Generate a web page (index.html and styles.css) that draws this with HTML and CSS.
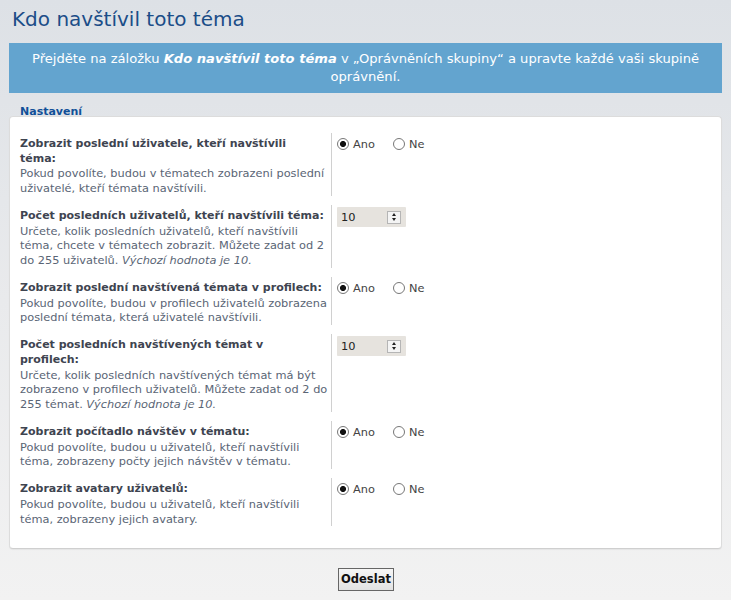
FILE: index.html
```html
<!DOCTYPE html>
<html lang="cs">
<head>
<meta charset="utf-8">
<title>Kdo navštívil toto téma</title>
<link rel="stylesheet" href="styles.css">
</head>
<body>
<div class="page">
  <h1 class="title">Kdo navštívil toto téma</h1>
  <div class="info">Přejděte na záložku <b><i>Kdo navštívil toto téma</i></b> v „Oprávněních skupiny“ a upravte každé vaši skupině oprávnění.</div>

  <div class="legend">Nastavení</div>
  <div class="panel">
    <div class="row">
      <div class="dt"><div class="label">Zobrazit poslední uživatele, kteří navštívili<br>téma:</div><div class="explain">Pokud povolíte, budou v tématech zobrazeni poslední uživatelé, kteří témata navštívili.</div></div>
      <div class="dd"><span class="radio on"></span><span class="rl">Ano</span><span class="radio"></span><span class="rl">Ne</span></div>
    </div>
    <div class="row">
      <div class="dt"><div class="label">Počet posledních uživatelů, kteří navštívili téma:</div><div class="explain">Určete, kolik posledních uživatelů, kteří navštívili téma, chcete v tématech zobrazit. Můžete zadat od 2 do 255 uživatelů. <i>Výchozí hodnota je 10.</i></div></div>
      <div class="dd"><div class="num"><span class="numval">10</span><span class="spin"><span class="up"></span><span class="dn"></span></span></div></div>
    </div>
    <div class="row">
      <div class="dt"><div class="label">Zobrazit poslední navštívená témata v profilech:</div><div class="explain">Pokud povolíte, budou v profilech uživatelů zobrazena poslední témata, která uživatelé navštívili.</div></div>
      <div class="dd"><span class="radio on"></span><span class="rl">Ano</span><span class="radio"></span><span class="rl">Ne</span></div>
    </div>
    <div class="row">
      <div class="dt"><div class="label">Počet posledních navštívených témat v<br>profilech:</div><div class="explain">Určete, kolik posledních navštívených témat má být zobrazeno v profilech uživatelů. Můžete zadat od 2 do 255 témat. <i>Výchozí hodnota je 10.</i></div></div>
      <div class="dd"><div class="num"><span class="numval">10</span><span class="spin"><span class="up"></span><span class="dn"></span></span></div></div>
    </div>
    <div class="row">
      <div class="dt"><div class="label">Zobrazit počítadlo návštěv v tématu:</div><div class="explain">Pokud povolíte, budou u uživatelů, kteří navštívili téma, zobrazeny počty jejich návštěv v tématu.</div></div>
      <div class="dd"><span class="radio on"></span><span class="rl">Ano</span><span class="radio"></span><span class="rl">Ne</span></div>
    </div>
    <div class="row">
      <div class="dt"><div class="label">Zobrazit avatary uživatelů:</div><div class="explain">Pokud povolíte, budou u uživatelů, kteří navštívili téma, zobrazeny jejich avatary.</div></div>
      <div class="dd"><span class="radio on"></span><span class="rl">Ano</span><span class="radio"></span><span class="rl">Ne</span></div>
    </div>
  </div>
  <div class="submit"><button class="btn" type="button">Odeslat</button></div>
</div>
</body>
</html>
```

FILE: styles.css
```css
html, body {
  margin: 0;
  padding: 0;
}
body {
  min-height: 600px;
  background: linear-gradient(#dde1e6 0%, #e9eaec 50%, #f2f2f2 100%);
  font-family: "DejaVu Sans", Verdana, sans-serif;
  font-size: 11px;
  color: #536482;
}
.page {
  padding: 0 9px;
}
.title {
  margin: 0;
  padding: 5px 0 0 3px;
  font-size: 20px;
  font-weight: normal;
  line-height: 28px;
  color: #1b4d88;
  height: 38px;
}
.info {
  background: #63a4cf;
  color: #fff;
  font-size: 13.1px;
  line-height: 18px;
  text-align: center;
  padding: 7px 18px 7px;
}
.legend {
  position: relative;
  z-index: 1;
  margin-top: 12px;
  margin-bottom: -2px;
  padding-left: 11px;
  font-weight: bold;
  font-size: 11px;
  line-height: 13px;
  color: #115098;
}
.panel {
  background: #fff;
  border: 1px solid #dcdcdc;
  border-bottom-color: #cfcfcf;
  border-radius: 4px;
  padding: 16px 10px 12px 10px;
  box-shadow: 0 1px 1px rgba(0,0,0,0.05);
}
.row {
  display: flex;
  margin-bottom: 9.2px;
  line-height: 14.7px;
}
.dt {
  flex: 0 0 311px;
  padding-top: 4px;
}
.label {
  font-weight: bold;
  color: #3e4450;
}
.explain {
  color: #5a6575;
  font-size: 11.35px;
}
.dd {
  border-left: 1px solid #d0d0d0;
  padding: 4px 0 0 5px;
  display: flex;
  align-items: flex-start;
  color: #444;
}
.radio {
  width: 12px;
  height: 12px;
  box-sizing: border-box;
  border: 1px solid #777;
  border-radius: 50%;
  background: #fff;
  margin: 1px 4px 0 0;
}
.radio.on {
  background: radial-gradient(circle, #111 0 2.7px, #fff 3.3px);
}
.rl {
  margin-right: 18px;
  color: #444;
  font-size: 11.35px;
}
.num {
  margin-top: -2px;
  width: 69px;
  height: 20px;
  background: #e6e3de;
  border-radius: 1px;
  display: flex;
  align-items: center;
  justify-content: space-between;
  box-sizing: border-box;
  padding: 0 5px 0 4px;
}
.numval {
  color: #222;
  font-size: 11.35px;
}
.spin {
  width: 12px;
  height: 11px;
  border: 1px solid #b5b5b5;
  background: #f4f4f4;
  display: flex;
  flex-direction: column;
  align-items: center;
  justify-content: center;
  gap: 2px;
}
.up {
  width: 0;
  height: 0;
  border-left: 2.5px solid transparent;
  border-right: 2.5px solid transparent;
  border-bottom: 3px solid #222;
}
.dn {
  width: 0;
  height: 0;
  border-left: 2.5px solid transparent;
  border-right: 2.5px solid transparent;
  border-top: 3px solid #222;
}
.submit {
  text-align: center;
  padding-top: 19px;
}
.btn {
  font-family: "DejaVu Sans", Verdana, sans-serif;
  font-size: 11.5px;
  font-weight: bold;
  color: #111;
  height: 23px;
  padding: 0 2px;
  border: 1px solid #666;
  border-radius: 0;
  background: linear-gradient(#f6f6f6, #e2e2e2);
  margin-left: 1px;
}
```
